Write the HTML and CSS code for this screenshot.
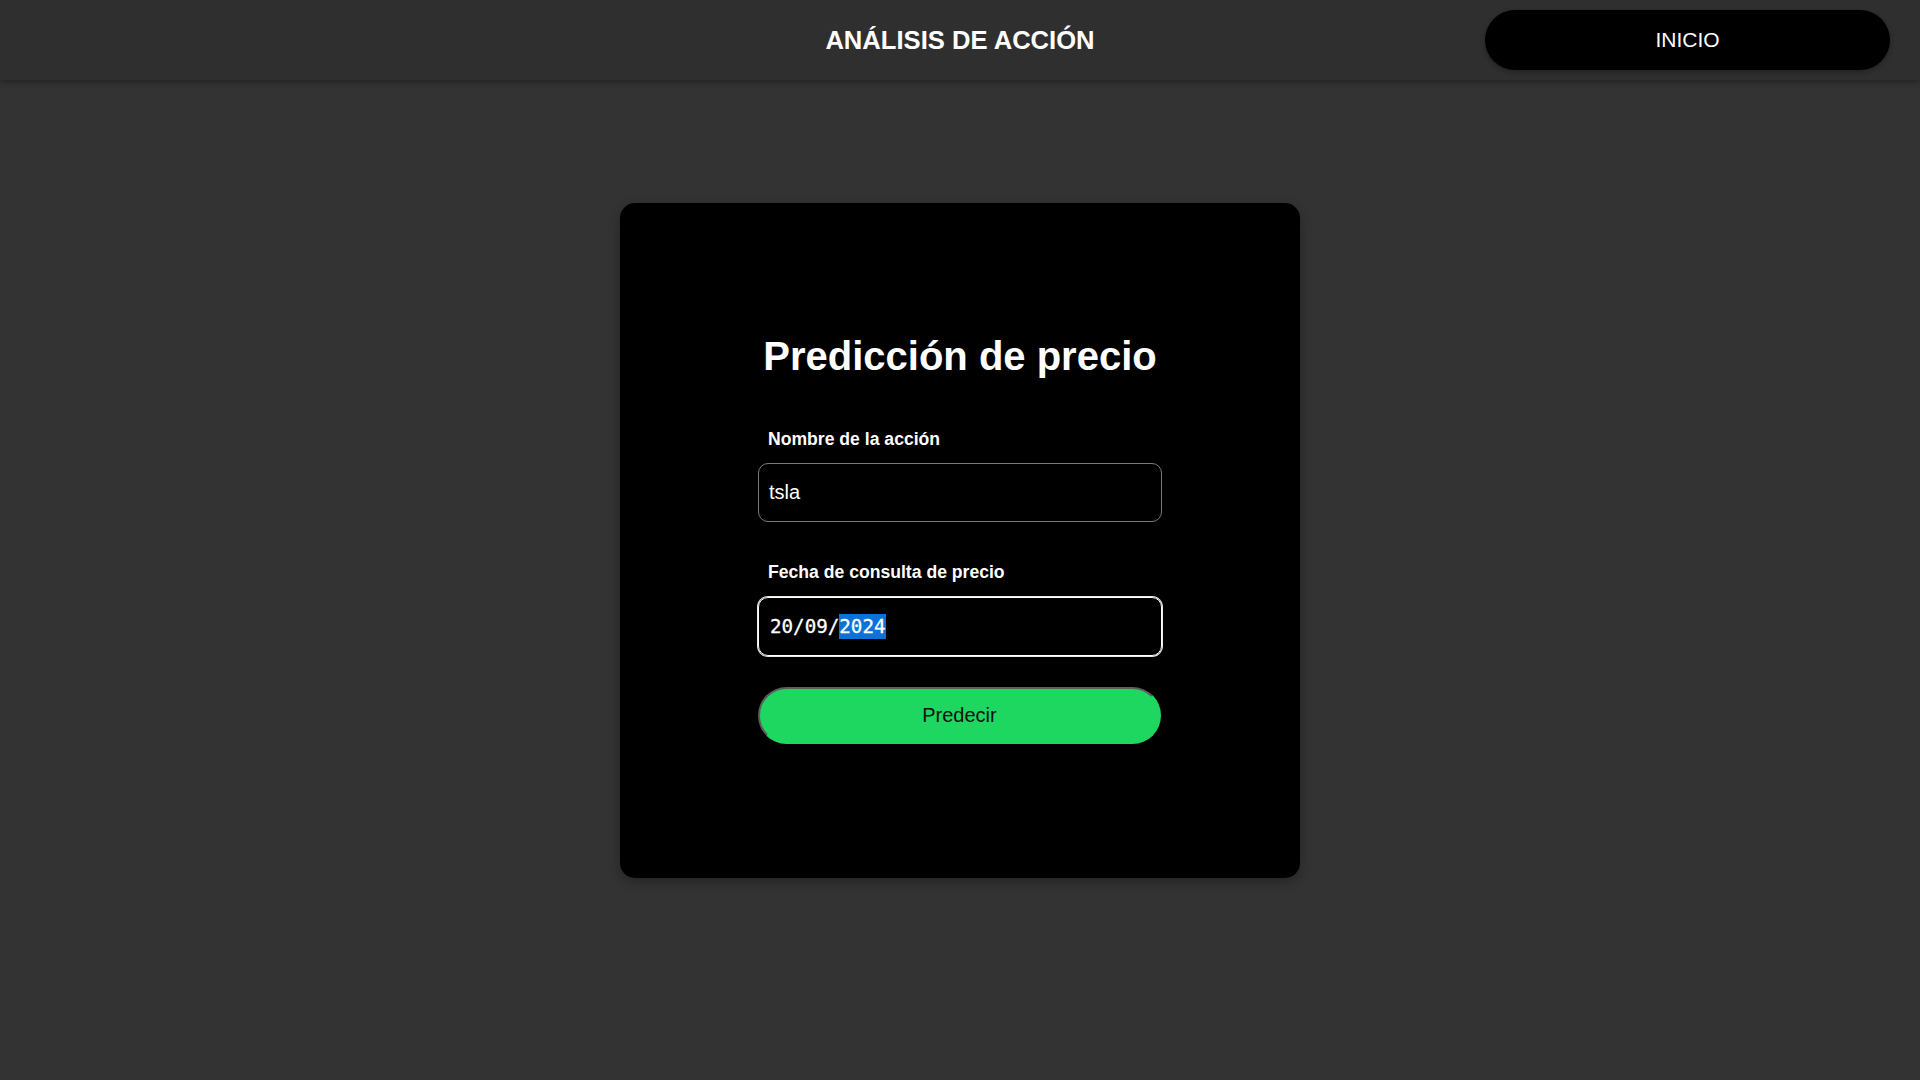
FILE: index.html
```html
<!DOCTYPE html>
<html lang="es">
<head>
<meta charset="utf-8">
<title>Análisis de acción</title>
<link rel="stylesheet" href="styles.css">
</head>
<body>
<header class="topbar">
  <div class="topbar-side"></div>
  <h1 class="topbar-title">ANÁLISIS DE ACCIÓN</h1>
  <div class="topbar-side topbar-right">
    <button class="home-btn" type="button">INICIO</button>
  </div>
</header>
<main class="main">
  <section class="card">
    <form class="form">
      <h2 class="form-title">Predicción de precio</h2>
      <label class="field-label label-first">Nombre de la acción</label>
      <div class="text-input">tsla</div>
      <label class="field-label label-second">Fecha de consulta de precio</label>
      <div class="date-input"><span class="date-text">20/09/<span class="date-sel">2024</span></span></div>
      <button class="predict-btn" type="button">Predecir</button>
    </form>
  </section>
</main>
</body>
</html>
```
FILE: styles.css
```css
* { box-sizing: border-box; }

html, body {
  margin: 0;
  padding: 0;
}

body {
  background: #333333;
  font-family: "Liberation Sans", Arial, sans-serif;
  color: #ffffff;
  min-height: 1080px;
}

.topbar {
  height: 80px;
  background: #2f2f2f;
  display: grid;
  grid-template-columns: 1fr auto 1fr;
  align-items: start;
  box-shadow: 0 2px 6px rgba(0, 0, 0, 0.35);
  position: relative;
  z-index: 1;
}

.topbar-title {
  margin: 0;
  font-size: 25.6px;
  font-weight: bold;
  line-height: 80px;
  color: #ffffff;
}

.topbar-right {
  display: flex;
  justify-content: flex-end;
  padding-right: 30px;
}

.home-btn {
  margin-top: 10px;
  width: 405px;
  height: 60px;
  border: none;
  border-radius: 30px;
  background: #000000;
  color: #ffffff;
  font-family: "Liberation Sans", Arial, sans-serif;
  font-size: 21px;
  line-height: 24px;
  padding: 0;
  box-shadow: 0 2px 5px rgba(0, 0, 0, 0.3);
}

.main {
  display: flex;
  justify-content: center;
  padding-top: 123px;
}

.card {
  width: 680px;
  height: 675px;
  background: #000000;
  border-radius: 15px;
  box-shadow: 0 4px 12px rgba(0, 0, 0, 0.3);
  display: flex;
  flex-direction: column;
  align-items: center;
  padding-top: 129px;
}

.form {
  width: 404px;
  display: flex;
  flex-direction: column;
}

.form-title {
  margin: 0;
  text-align: center;
  font-size: 40px;
  line-height: 48px;
  font-weight: bold;
  color: #ffffff;
}

.field-label {
  display: block;
  padding-left: 10px;
  font-size: 17.6px;
  line-height: 20px;
  font-weight: bold;
  color: #ffffff;
}

.label-first { margin-top: 49px; }
.label-second { margin-top: 40px; }

.text-input {
  margin-top: 14px;
  height: 59px;
  border: 1px solid #7a7a7a;
  border-radius: 10px;
  padding: 0 10px;
  display: flex;
  align-items: center;
  font-size: 20px;
  line-height: 23px;
  color: #ffffff;
}

.date-input {
  margin-top: 15px;
  height: 59px;
  border: 1px solid #ffffff;
  box-shadow: 0 0 0 1px #e8e8e8;
  border-radius: 10px;
  padding: 0 11px;
  display: flex;
  align-items: center;
}

.date-text {
  font-family: "DejaVu Sans Mono", "Liberation Mono", monospace;
  font-size: 19.2px;
  line-height: 25px;
  color: #ffffff;
  -webkit-text-stroke: 0.3px #ffffff;
}

.date-sel {
  display: inline-block;
  background: #0a72d8;
  line-height: 25px;
}

.predict-btn {
  margin-top: 31px;
  width: 403px;
  height: 57px;
  border-radius: 29px;
  border: 2px solid;
  border-color: #5c5c5c #1ed760 #1ed760 #5c5c5c;
  background: #1ed760;
  color: #111111;
  font-family: "Liberation Sans", Arial, sans-serif;
  font-size: 20px;
  line-height: 23px;
  padding: 0;
}
```
